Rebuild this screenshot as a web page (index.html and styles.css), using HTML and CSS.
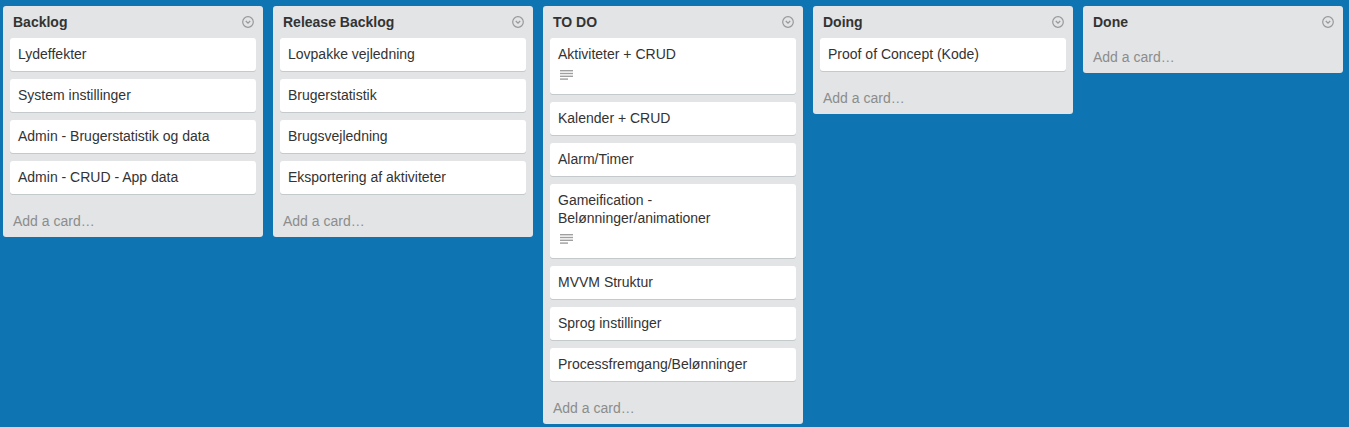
FILE: index.html
```
<!DOCTYPE html>
<html>
<head>
<meta charset="utf-8">
<link rel="stylesheet" href="styles.css">
</head>
<body>
<div class="board">
  <div class="list">
    <div class="list-header"><span class="list-title">Backlog</span><svg class="chev" viewBox="0 0 12 12" width="12" height="12"><circle cx="6" cy="6" r="5.3" fill="none" stroke="#999" stroke-width="1.2"/><path d="M3.8 5 L6 7.2 L8.2 5" fill="none" stroke="#999" stroke-width="1.3"/></svg></div>
    <div class="cards">
      <div class="card">Lydeffekter</div>
      <div class="card">System instillinger</div>
      <div class="card">Admin - Brugerstatistik og data</div>
      <div class="card">Admin - CRUD - App data</div>
    </div>
    <div class="composer">Add a card…</div>
  </div>
  <div class="list">
    <div class="list-header"><span class="list-title">Release Backlog</span><svg class="chev" viewBox="0 0 12 12" width="12" height="12"><circle cx="6" cy="6" r="5.3" fill="none" stroke="#999" stroke-width="1.2"/><path d="M3.8 5 L6 7.2 L8.2 5" fill="none" stroke="#999" stroke-width="1.3"/></svg></div>
    <div class="cards">
      <div class="card">Lovpakke vejledning</div>
      <div class="card">Brugerstatistik</div>
      <div class="card">Brugsvejledning</div>
      <div class="card">Eksportering af aktiviteter</div>
    </div>
    <div class="composer">Add a card…</div>
  </div>
  <div class="list">
    <div class="list-header"><span class="list-title">TO DO</span><svg class="chev" viewBox="0 0 12 12" width="12" height="12"><circle cx="6" cy="6" r="5.3" fill="none" stroke="#999" stroke-width="1.2"/><path d="M3.8 5 L6 7.2 L8.2 5" fill="none" stroke="#999" stroke-width="1.3"/></svg></div>
    <div class="cards">
      <div class="card"><div>Aktiviteter + CRUD</div><div class="badges"><svg class="desc" viewBox="0 0 13 10" width="13" height="10"><rect x="0" y="0" width="13" height="1.4" fill="#a0a0a0"/><rect x="0" y="2.8" width="13" height="1.4" fill="#a0a0a0"/><rect x="0" y="5.6" width="13" height="1.4" fill="#a0a0a0"/><rect x="0" y="8.4" width="8" height="1.4" fill="#a0a0a0"/></svg></div></div>
      <div class="card">Kalender + CRUD</div>
      <div class="card">Alarm/Timer</div>
      <div class="card"><div>Gameification - Belønninger/animationer</div><div class="badges"><svg class="desc" viewBox="0 0 13 10" width="13" height="10"><rect x="0" y="0" width="13" height="1.4" fill="#a0a0a0"/><rect x="0" y="2.8" width="13" height="1.4" fill="#a0a0a0"/><rect x="0" y="5.6" width="13" height="1.4" fill="#a0a0a0"/><rect x="0" y="8.4" width="8" height="1.4" fill="#a0a0a0"/></svg></div></div>
      <div class="card">MVVM Struktur</div>
      <div class="card">Sprog instillinger</div>
      <div class="card">Processfremgang/Belønninger</div>
    </div>
    <div class="composer">Add a card…</div>
  </div>
  <div class="list">
    <div class="list-header"><span class="list-title">Doing</span><svg class="chev" viewBox="0 0 12 12" width="12" height="12"><circle cx="6" cy="6" r="5.3" fill="none" stroke="#999" stroke-width="1.2"/><path d="M3.8 5 L6 7.2 L8.2 5" fill="none" stroke="#999" stroke-width="1.3"/></svg></div>
    <div class="cards">
      <div class="card">Proof of Concept (Kode)</div>
    </div>
    <div class="composer">Add a card…</div>
  </div>
  <div class="list">
    <div class="list-header"><span class="list-title">Done</span><svg class="chev" viewBox="0 0 12 12" width="12" height="12"><circle cx="6" cy="6" r="5.3" fill="none" stroke="#999" stroke-width="1.2"/><path d="M3.8 5 L6 7.2 L8.2 5" fill="none" stroke="#999" stroke-width="1.3"/></svg></div>
    <div class="composer">Add a card…</div>
  </div>
</div>
</body>
</html>
```
FILE: styles.css
```
html, body {
  margin: 0;
  padding: 0;
  height: 100%;
}
body {
  background: #0f74b2;
  font-family: "Liberation Sans", Arial, sans-serif;
  font-size: 14px;
  color: #333;
}
.board {
  display: flex;
  align-items: flex-start;
  gap: 10px;
  padding: 6px 0 0 3px;
}
.list {
  width: 260px;
  flex: 0 0 260px;
  background: #e2e4e6;
  border-radius: 3px;
}
.list-header {
  display: flex;
  align-items: center;
  justify-content: space-between;
  height: 32px;
  box-sizing: border-box;
  padding: 0 9px 0 10px;
}
.list-title {
  font-weight: bold;
  line-height: 18px;
  color: #333;
}
.chev {
  display: block;
}
.cards {
  padding: 0 7px;
}
.card {
  background: #fff;
  border-radius: 3px;
  box-shadow: 0 1px 0 #c4c9cc;
  padding: 7px 8px 8px;
  line-height: 18px;
  margin-bottom: 8px;
  color: #333;
}
.badges {
  height: 23px;
  display: flex;
  align-items: center;
}
.desc {
  display: block;
  margin-left: 2px;
}
.composer {
  padding: 9px 10px 6px;
  line-height: 20px;
  color: #8c8c8c;
}
```
